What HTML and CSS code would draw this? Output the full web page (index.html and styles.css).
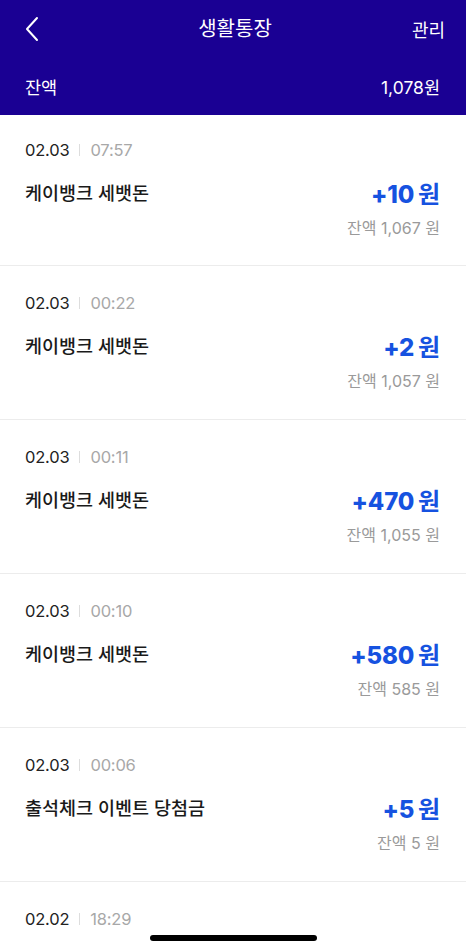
FILE: index.html
```html
<!DOCTYPE html>
<html lang="ko">
<head>
<meta charset="utf-8">
<link rel="stylesheet" href="styles.css">
</head>
<body>
<div class="app">
  <header class="header">
    <div class="nav">
      <svg class="back" width="16" height="26" viewBox="0 0 16 26"><path d="M13 2 L3 13 L13 24" fill="none" stroke="#fff" stroke-width="2" stroke-linecap="round" stroke-linejoin="round"/></svg>
      <div class="title">생활통장</div>
      <div class="manage">관리</div>
    </div>
    <div class="balance">
      <span>잔액</span>
      <span>1,078원</span>
    </div>
  </header>
  <ul class="list">
    <li class="item first">
      <div class="when"><span class="date">02.03</span><span class="bar"></span><span class="time">07:57</span></div>
      <div class="row"><span class="name">케이뱅크 세뱃돈</span><span class="amount">+10<span class="won">원</span></span></div>
      <div class="rest">잔액 1,067 원</div>
    </li>
    <li class="item">
      <div class="when"><span class="date">02.03</span><span class="bar"></span><span class="time">00:22</span></div>
      <div class="row"><span class="name">케이뱅크 세뱃돈</span><span class="amount">+2<span class="won">원</span></span></div>
      <div class="rest">잔액 1,057 원</div>
    </li>
    <li class="item">
      <div class="when"><span class="date">02.03</span><span class="bar"></span><span class="time">00:11</span></div>
      <div class="row"><span class="name">케이뱅크 세뱃돈</span><span class="amount">+470<span class="won">원</span></span></div>
      <div class="rest">잔액 1,055 원</div>
    </li>
    <li class="item">
      <div class="when"><span class="date">02.03</span><span class="bar"></span><span class="time">00:10</span></div>
      <div class="row"><span class="name">케이뱅크 세뱃돈</span><span class="amount">+580<span class="won">원</span></span></div>
      <div class="rest">잔액 585 원</div>
    </li>
    <li class="item">
      <div class="when"><span class="date">02.03</span><span class="bar"></span><span class="time">00:06</span></div>
      <div class="row"><span class="name">출석체크 이벤트 당첨금</span><span class="amount">+5<span class="won">원</span></span></div>
      <div class="rest">잔액 5 원</div>
    </li>
    <li class="item">
      <div class="when"><span class="date">02.02</span><span class="bar"></span><span class="time">18:29</span></div>
    </li>
  </ul>
  <div class="home-indicator"></div>
</div>
</body>
</html>
```
FILE: styles.css
```css
* { box-sizing: border-box; }
html, body { margin: 0; padding: 0; }
body {
  font-family: Inter, "Noto Sans CJK KR", "Noto Sans", sans-serif;
  background: #fff;
  color: #111;
}
.app {
  width: 466px;
  height: 952px;
  overflow: hidden;
  position: relative;
}
.header {
  background: #1a0093;
  color: #fff;
  height: 115px;
  padding: 0 26px 0 25px;
}
.nav {
  height: 58px;
  display: flex;
  align-items: center;
  justify-content: space-between;
  position: relative;
  margin-right: -5px;
}
.back { display: block; margin-left: -1px; }
.title {
  position: absolute;
  left: 0; right: 0;
  text-align: center;
  font-size: 20px;
  line-height: 58px;
  pointer-events: none;
}
.manage { font-size: 18px; }
.balance {
  height: 57px;
  display: flex;
  align-items: center;
  justify-content: space-between;
  font-size: 17.5px;
}
.list { list-style: none; margin: 0; padding: 0; }
.item {
  height: 154px;
  border-bottom: 1px solid #ececec;
  padding: 25px 26px 0 25px;
}
.item.first { height: 151px; padding-top: 23px; }
.when {
  display: flex;
  align-items: center;
  height: 24px;
  font-size: 16.5px;
  letter-spacing: -0.2px;
}
.date { color: #222; }
.bar {
  width: 1px;
  height: 12px;
  background: #ddd;
  margin: 0 10px;
}
.time { color: #a8a8a8; }
.row {
  display: flex;
  justify-content: space-between;
  align-items: center;
  height: 32px;
  margin-top: 14px;
}
.name { font-size: 18.5px; color: #1a1a1a; font-weight: 500; }
.amount {
  font-size: 24px;
  font-weight: 800;
  color: #1652e0;
  letter-spacing: -0.2px;
}
.won { margin-left: 4px; font-size: 24px; font-weight: 700; }
.rest {
  text-align: right;
  font-size: 16px;
  color: #9a9a9a;
  margin-top: 7px;
  height: 24px;
}
.home-indicator {
  position: absolute;
  left: 150px;
  top: 935px;
  width: 167px;
  height: 6px;
  border-radius: 3px;
  background: #000;
}
```
